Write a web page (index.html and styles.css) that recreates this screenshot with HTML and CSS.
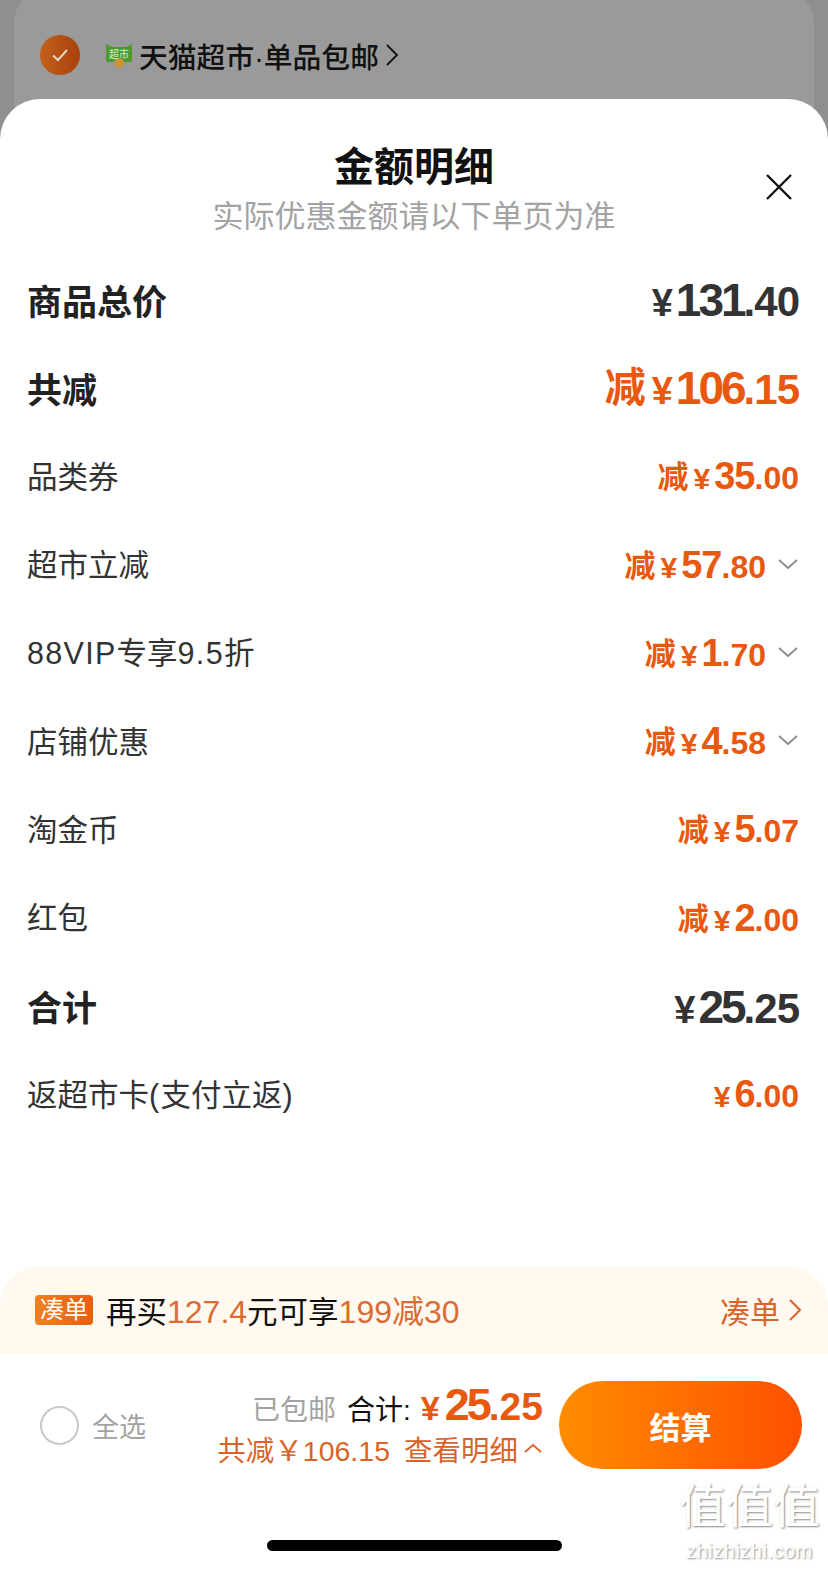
FILE: index.html
```html
<!DOCTYPE html>
<html lang="zh-CN">
<head>
    <meta charset="UTF-8">
    <meta name="viewport" content="width=device-width, initial-scale=1.0">
    <title>金额明细</title>
    <link rel="stylesheet" href="styles.css">
</head>
<body>
    <div class="page">
        <!-- Dimmed shop row behind the sheet -->
        <div class="backdrop">
            <div class="shop-card">
                <span class="shop-check">
                    <svg width="20" height="16" viewBox="0 0 20 16"><path d="M3 8.5 L8 13 L17 3" fill="none" stroke="#e8d5c8" stroke-width="2"/></svg>
                </span>
                <svg class="shop-logo" width="28" height="27" viewBox="0 0 28 27">
                    <path d="M1 2 L7 5 H21 L27 2 V18 Q27 20 25 20 H3 Q1 20 1 18 Z" fill="#4d9a2c"/>
                    <circle cx="14" cy="21" r="5" fill="#c9923a"/>
                    <text x="14" y="16" class="logo-text">超市</text>
                </svg>
                <span class="shop-name">天猫超市·单品包邮</span>
                <svg width="14" height="24" viewBox="0 0 14 24"><path d="M2 2 L12 12 L2 22" fill="none" stroke="#111" stroke-width="1.8"/></svg>
            </div>
        </div>

        <main class="sheet">
            <header class="sheet-head">
                <h1>金额明细</h1>
                <p>实际优惠金额请以下单页为准</p>
                <button class="close-btn" aria-label="关闭">
                    <svg width="28" height="28" viewBox="0 0 28 28"><path d="M2 2 L26 26 M26 2 L2 26" stroke="#111" stroke-width="2.4"/></svg>
                </button>
            </header>

            <div class="rows">
                <div class="row row-strong">
                    <span class="label">商品总价</span>
                    <span class="amount dark big"><span class="yen">¥</span>131<small>.40</small></span>
                </div>
                <div class="row row-strong">
                    <span class="label">共减</span>
                    <span class="amount big"><span class="minus">减</span><span class="yen">¥</span>106<small>.15</small></span>
                </div>
                <div class="row">
                    <span class="label">品类券</span>
                    <span class="amount"><span class="minus">减</span><span class="yen">¥</span>35<small>.00</small></span>
                </div>
                <div class="row">
                    <span class="label">超市立减</span>
                    <span class="amount"><span class="minus">减</span><span class="yen">¥</span>57<small>.80</small><svg class="chev" width="22" height="12" viewBox="0 0 22 12"><path d="M2 2 L11 10 L20 2" fill="none" stroke="#8a8a8a" stroke-width="1.8"/></svg></span>
                </div>
                <div class="row">
                    <span class="label"><span class="latin">88VIP</span>专享<span class="latin">9.5</span>折</span>
                    <span class="amount"><span class="minus">减</span><span class="yen">¥</span>1<small>.70</small><svg class="chev" width="22" height="12" viewBox="0 0 22 12"><path d="M2 2 L11 10 L20 2" fill="none" stroke="#8a8a8a" stroke-width="1.8"/></svg></span>
                </div>
                <div class="row">
                    <span class="label">店铺优惠</span>
                    <span class="amount"><span class="minus">减</span><span class="yen">¥</span>4<small>.58</small><svg class="chev" width="22" height="12" viewBox="0 0 22 12"><path d="M2 2 L11 10 L20 2" fill="none" stroke="#8a8a8a" stroke-width="1.8"/></svg></span>
                </div>
                <div class="row">
                    <span class="label">淘金币</span>
                    <span class="amount"><span class="minus">减</span><span class="yen">¥</span>5<small>.07</small></span>
                </div>
                <div class="row">
                    <span class="label">红包</span>
                    <span class="amount"><span class="minus">减</span><span class="yen">¥</span>2<small>.00</small></span>
                </div>
                <div class="row row-strong">
                    <span class="label">合计</span>
                    <span class="amount dark big"><span class="yen">¥</span>25<small>.25</small></span>
                </div>
                <div class="row">
                    <span class="label">返超市卡<span class="latin">(</span>支付立返<span class="latin">)</span></span>
                    <span class="amount"><span class="yen">¥</span>6<small>.00</small></span>
                </div>
            </div>

            <div class="promo">
                <span class="promo-tag">凑单</span>
                <span class="promo-text">再买<em>127.4</em>元可享<em>199减30</em></span>
                <span class="promo-link">凑单
                    <svg width="14" height="24" viewBox="0 0 14 24"><path d="M2 2 L12 12 L2 22" fill="none" stroke="#d9642a" stroke-width="2"/></svg>
                </span>
            </div>

            <footer class="bar">
                <div class="select-all">
                    <span class="radio"></span>
                    <span>全选</span>
                </div>
                <div class="summary">
                    <div class="summary-top">
                        <span class="free">已包邮</span>
                        <span class="sum-label">合计:</span>
                        <span class="amount big-sum"><span class="yen">¥</span>25<small>.25</small></span>
                    </div>
                    <div class="summary-sub">
                        <span>共减￥106.15</span>
                        <span class="detail">查看明细
                            <svg width="20" height="11" viewBox="0 0 20 11"><path d="M2 9 L10 2 L18 9" fill="none" stroke="#d9642a" stroke-width="1.8"/></svg>
                        </span>
                    </div>
                </div>
                <button class="pay-btn">结算</button>
            </footer>

            <div class="home-bar"></div>

            <div class="watermark">
                <span class="wm-cn">值值值</span>
                <span class="wm-en">zhizhizhi.com</span>
            </div>
        </main>
    </div>
</body>
</html>
```

FILE: styles.css
```css
* {
    box-sizing: border-box;
}

body {
    margin: 0;
    background-color: #8f8f8f;
    font-family: "Liberation Sans", "Noto Sans CJK SC", sans-serif;
}

.page {
    width: 828px;
    height: 1569px;
    overflow: hidden;
}

/* Backdrop */
.backdrop {
    height: 99px;
    padding: 0 14px;
    display: flow-root;
}

.shop-card {
    height: 140px;
    margin-top: -8px;
    display: flex;
    align-items: center;
    padding: 0 26px 14px;
    background-color: #9a9a9a;
    border-radius: 30px 30px 0 0;
}

.shop-check {
    width: 40px;
    height: 40px;
    border-radius: 50%;
    background: linear-gradient(90deg, #c2611a, #a8400c);
    display: flex;
    align-items: center;
    justify-content: center;
    margin-right: 25px;
}

.shop-logo {
    margin-right: 6px;
}

.logo-text {
    font-size: 10px;
    fill: #d6ebc8;
    text-anchor: middle;
}

.shop-name {
    font-size: 28.8px;
    font-weight: 500;
    color: #111;
    margin-right: 6px;
}

/* Sheet */
.sheet {
    position: relative;
    height: 1470px;
    background-color: white;
    border-radius: 40px 40px 0 0;
    display: flex;
    flex-direction: column;
}

.sheet-head {
    position: relative;
    padding-top: 42px;
    text-align: center;
}

.sheet-head h1 {
    margin: 0;
    font-size: 40px;
    line-height: 52px;
    font-weight: 700;
    color: #111;
}

.sheet-head p {
    margin: 0;
    font-size: 31px;
    line-height: 47px;
    color: #a3a3a3;
}

.close-btn {
    position: absolute;
    right: 35px;
    top: 74px;
    padding: 0;
    border: none;
    background: none;
    line-height: 0;
}

/* Rows */
.rows {
    padding: 0 29px 0 27px;
    margin-top: 16px;
}

.row {
    height: 88.3px;
    display: flex;
    align-items: center;
    justify-content: space-between;
}

.label {
    font-size: 30.5px;
    color: #333;
    margin-bottom: 4px;
}

.latin {
    letter-spacing: 1.3px;
}

.row-strong .label {
    font-size: 35px;
    font-weight: 700;
    color: #222;
    margin-bottom: 2px;
}

/* Digits are squeezed to get close to the app's condensed number font */
.amount {
    white-space: nowrap;
    font-size: 38px;
    font-weight: 700;
    letter-spacing: -1px;
    color: #e8590f;
}

.amount small {
    font-size: 32px;
    letter-spacing: 0;
}

.amount .minus {
    font-size: 31px;
    line-height: 1;
    letter-spacing: 0;
    margin-right: 5px;
    vertical-align: 1px;
}

.amount .yen {
    font-size: 30px;
    letter-spacing: 0;
    margin-right: 4px;
}

.amount.big {
    font-size: 46px;
    letter-spacing: -3px;
}

.amount.big small {
    font-size: 42px;
    letter-spacing: -1px;
}

.amount.big .minus {
    font-size: 41px;
    margin-right: 6px;
    vertical-align: 2px;
}

.amount.big .yen {
    font-size: 38px;
    margin-right: 3px;
}

.amount.dark {
    color: #333;
}

.chev {
    margin-left: 11px;
    vertical-align: 8px;
}

/* Promo strip */
.promo {
    margin-top: auto;
    height: 88px;
    display: flex;
    align-items: center;
    padding: 0 26px 0 35px;
    background-color: #fff9f0;
    border-radius: 40px 40px 0 0;
    font-size: 30.5px;
    color: #111;
}

.promo-tag {
    width: 58px;
    height: 30px;
    line-height: 30px;
    text-align: center;
    font-size: 24px;
    color: #fff;
    background: linear-gradient(90deg, #f08020, #e85f10);
    border-radius: 4px;
    margin-right: 13px;
}

.promo-text {
    margin-bottom: 3px;
}

.promo-text em {
    font-style: normal;
    font-size: 32px;
    color: #dc6a34;
}

.promo-link {
    margin-left: auto;
    margin-bottom: 1px;
    display: flex;
    align-items: center;
    gap: 8px;
    font-size: 30px;
    color: #d9642a;
}

/* Bottom bar */
.bar {
    height: 142px;
    display: flex;
    align-items: center;
    padding: 0 26px 0 40px;
}

.select-all {
    display: flex;
    align-items: center;
    gap: 13px;
    font-size: 27px;
    color: #a3a3a3;
}

.radio {
    width: 39px;
    height: 39px;
    border: 2px solid #c9c9c9;
    border-radius: 50%;
}

.summary {
    margin-left: auto;
    margin-right: 16px;
    margin-bottom: 4px;
    display: flex;
    flex-direction: column;
    align-items: flex-end;
}

.summary-top {
    display: flex;
    align-items: baseline;
    height: 50px;
    font-size: 28px;
}

.free {
    color: #a3a3a3;
    margin-right: 11px;
}

.sum-label {
    color: #111;
    margin-right: 10px;
}

.amount.big-sum {
    font-size: 45px;
    letter-spacing: -3px;
}

.amount.big-sum small {
    font-size: 39px;
    letter-spacing: 0;
}

.amount.big-sum .yen {
    font-size: 34px;
    margin-right: 5px;
}

.summary-sub {
    display: flex;
    align-items: center;
    gap: 14px;
    height: 38px;
    font-size: 28.5px;
    color: #d9642a;
}

.detail {
    display: flex;
    align-items: center;
    gap: 5px;
}

.pay-btn {
    width: 243px;
    height: 88px;
    border: none;
    border-radius: 44px;
    background: linear-gradient(90deg, #ff8c00, #ff5000);
    color: white;
    font-size: 31px;
    font-weight: 700;
    font-family: inherit;
}

.home-bar {
    width: 295px;
    height: 11px;
    margin: 44px auto 18px;
    background-color: #000;
    border-radius: 6px;
}

.watermark {
    position: absolute;
    right: 8px;
    bottom: 7px;
    display: flex;
    flex-direction: column;
    align-items: center;
    color: #fff;
    text-shadow: 1px 1px 2px #8a8a8a;
}

.wm-cn {
    font-size: 47px;
    line-height: 52px;
    margin-bottom: 7px;
}

.wm-en {
    font-size: 20px;
    line-height: 22px;
    letter-spacing: 0.5px;
}
```
